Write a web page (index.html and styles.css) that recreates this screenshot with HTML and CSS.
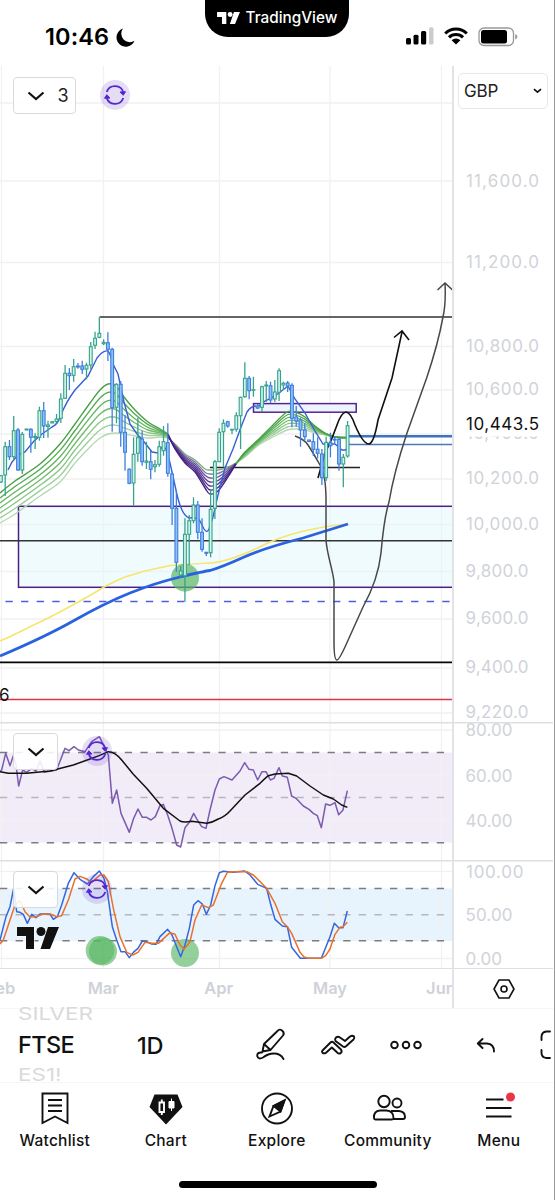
FILE: index.html
```
<!DOCTYPE html>
<html lang="en">
<head>
<meta charset="utf-8">
<title>FTSE chart</title>
<link rel="stylesheet" href="styles.css">
</head>
<body>
<svg class="defs" width="0" height="0">
  <defs>
    <symbol id="tv-logo" viewBox="0 0 42 22"><path d="M0 0H17V22H9V9H0ZM31 0H42L33 22H23.500Z"/><circle cx="24" cy="4.500" r="4.500"/></symbol>
    <symbol id="sync" viewBox="-15 -15 30 30">
      <circle r="15" fill="#6633cc" fill-opacity=".17"/>
      <path d="M-8.300 -3A8.800 8.800 0 0 1 8.500 -2.200M8.300 3A8.800 8.800 0 0 1 -8.500 2.200" fill="none" stroke="#5428cf" stroke-width="1.800"/>
      <path d="M5 -3L10.500 -3.300L8.200 .3ZM-5 3L-10.500 3.300L-8.200 -.3Z" fill="#5428cf" stroke="#5428cf" stroke-width="1"/>
    </symbol>
    <symbol id="chevron" viewBox="0 0 18 10"><path d="M1.500 1.500L9 8L16.500 1.500" fill="none" stroke="#111" stroke-width="2.200"/></symbol>
  </defs>
</svg>
<div class="screen">
  <header class="status">
    <div class="clock"><span>10:46</span>
      <svg class="moon" viewBox="0 0 19 19"><path d="M7 .5A9.300 9.300 0 1 0 18.500 12.700A8.500 8.500 0 0 1 7 .5Z"/></svg>
    </div>
    <div class="brand"><svg class="brand-logo"><use href="#tv-logo"/></svg><span>TradingView</span></div>
    <div class="signals">
      <svg width="28" height="18" viewBox="0 0 28 18"><rect y="11" width="5" height="6.500" rx="1.500"/><rect x="7.500" y="7.800" width="5" height="9.700" rx="1.500"/><rect x="15" y="4" width="5.200" height="13.500" rx="1.500"/><rect x="23" y=".3" width="4.500" height="17.200" rx="1.500" fill="#ccc"/></svg>
      <svg width="24" height="18" viewBox="0 0 24 18"><path d="M1.200 6.500A15.500 15.500 0 0 1 22.800 6.500M5 10.400A10 10 0 0 1 19 10.400" fill="none" stroke="#000" stroke-width="3"/><path d="M7.600 13.200A6.500 6.500 0 0 1 16.400 13.200L12 17.500Z"/></svg>
      <svg width="40" height="20" viewBox="0 0 40 20"><rect x="1" y="1" width="34.500" height="17.500" rx="5" fill="none" stroke="#999" stroke-width="1.300"/><rect x="3" y="3" width="26" height="13.500" rx="2.500"/><path d="M37.200 7Q39.500 8 39.500 9.700Q39.500 11.500 37.200 12.500Z" fill="#999"/></svg>
    </div>
  </header>

  <main class="chart">
    <div class="panes">
      <svg class="price" viewBox="0 66 452 656">
        <g class="grid"><path d="M1.500 66V722M103.500 66V722M219.500 66V722M330 66V722M441.500 66V722M0 103H452M0 181H452M0 262.500H452M0 346.500H452M0 390H452M0 434H452M0 479H452M0 524.500H452M0 571.500H452M0 619H452M0 668H452M0 713H452"/></g>
        <rect x="18.500" y="506.300" width="440" height="81" fill="#dff6fa" fill-opacity=".48" stroke="#4a2183" stroke-width="1.500"/>
        <path d="M5.500 601.500H452" stroke="#4a5fdc" stroke-width="1.500" stroke-dasharray="7.300 8.300"/>
        <path d="M99.500 317H452M0 540.700H452" stroke="#333" stroke-width="1.600"/>
        <path d="M0 662.300H452" stroke="#050505" stroke-width="1.700"/>
        <path d="M0 699.500H452" stroke="#dd3546" stroke-width="1.500"/>
        <path d="M210 467.500H360" stroke="#222" stroke-width="1.500"/>
        <rect x="253.500" y="403.600" width="102.700" height="8.600" fill="#eef4ff" stroke="#572391" stroke-width="1.500"/>
        <g id="ribbon" fill="none"></g>
        <path d="M0 641C16 634 25 629 40 622S90 596 104 587Q115 581 125 577L145 571L170 565.500Q190 564 210 563T270 542Q303 528 348 524" fill="none" stroke="#f6e56e" stroke-width="1.700"/>
        <circle cx="185" cy="577.700" r="14" fill="#5ab765" fill-opacity=".7"/>
        <path d="M0 656Q45 637 75 620T130 593Q155 583 180 577T210 570.500Q222 567 243 557.500T303 538L348 524" fill="none" stroke="#2a61df" stroke-width="2.800"/>
        <path d="M8 470L12 462L18 455L25 452L34 441L42 434L52 427Q58 424 60 417Q66 402 75 390L88 376L97 358Q103 350 108 351Q111 355 113 364L118 374L124 402L130 424L137 434L145 443L152 452L158 453Q162 444 166 449L170 463L176 490Q181 515 189 518Q197 517 200 521L204 529Q207 534 209 529L213 517L218 495L225 468L233 449L241 427L247 412Q251 406 256 406M256 408L265 401L275 396L288 386L295 399L305 413L315 431L323 444H335L342 450H346L349 442" fill="none" stroke="#355fd9" stroke-width="1.400"/>
        <path d="M347 436.300H452" stroke="#3e74be" stroke-width="2.500"/><path d="M347 444.500H452" stroke="#4c78b8" stroke-width="1.300"/>
        <path d="M295 436Q304 439 308 445T320 465Q326 475 326 500V540C327 555 333 570 334 582V642Q334 660 337 660Q339 660 345 647L363 607Q378 580 381 553Q384 518 389 502Q394 472 407 433L427 377Q438 344 443 317Q446 304 445 283M437.500 290L445 283L452.500 290" fill="none" stroke="#484848" stroke-width="1.500"/>
        <path d="M318 478L325 453Q332 440 337 425Q341 413 346 412Q351 413 355 425Q363 444 369 444Q374 443 378 420L392 378Q396 360 402 332M394 337.500L402 331L409 340" fill="none" stroke="#111" stroke-width="1.600"/>
        <g id="candles"></g>
        <text x="-1" y="700.800" class="note">6</text>
      </svg>
      <svg class="rsi" viewBox="0 722 452 138">
        <rect y="752.500" width="452" height="90" fill="#f2ecf9"/>
        <g class="grid"><path d="M1.500 722V860M103.500 722V860M219.500 722V860M330 722V860M441.500 722V860M0 730H452M0 775.300H452M0 820.500H452"/></g>
        <path class="divider" d="M0 722.700H452"/>
        <g class="levels"><path d="M0 752.500H452M0 842.700H452"/><path class="mid" d="M0 797.500H452"/></g>
        <g class="study" transform="translate(0 715) scale(.33333)">
          <polyline stroke="#7a5bb0" points="0,170 5,165 17,115 30,152 40,122 48,150 56,213 68,165 80,172 95,160 108,168 120,138 133,172 170,165 195,100 207,107 222,95 235,105 255,110 275,80 298,65 325,120 337,265 350,225 363,295 388,352 401,310 414,282 427,307 440,307 453,315 466,305 480,272 490,268 503,300 516,340 530,390 542,396 555,338 568,322 581,295 592,315 605,335 618,340 630,285 645,225 658,192 672,185 696,195 720,168 734,143 747,163 760,165 773,195 786,170 798,170 811,195 822,190 837,158 847,183 862,187 875,243 888,250 910,273 927,283 940,295 952,302 964,338 977,267 990,271 1005,263 1016,299 1029,285 1042,227"/>
          <path stroke="#111" d="M0 170L25 175H80L150 168L220 150L270 132Q300 122 325 110Q345 110 365 135L400 178L440 220L490 280L540 318Q550 323 575 319L620 325Q638 322 655 312Q675 305 690 288L735 240L780 205Q795 190 805 182L825 177L865 175L890 183L930 213L970 240L1000 252L1025 270L1042 277"/>
        </g>
      </svg>
      <svg class="stoch" viewBox="0 860 452 108">
        <rect y="888.500" width="452" height="52.500" fill="#e8f4fd"/>
        <g class="grid"><path d="M1.500 860V968M103.500 860V968M219.500 860V968M330 860V968M441.500 860V968M0 871.300H452M0 958.500H452"/></g>
        <path class="divider" d="M0 860.700H452"/>
        <g class="levels"><path d="M0 888.500H452M0 940.800H452"/><path class="mid" d="M0 914.700H452"/></g>
        <circle cx="100" cy="950.300" r="14.300" fill="#5ab765" fill-opacity=".65"/><circle cx="103" cy="951.500" r="14" fill="#5ab765" fill-opacity=".65"/><circle cx="185" cy="953" r="14" fill="#5ab765" fill-opacity=".65"/>
        <g class="study" transform="translate(0 715) scale(.33333)">
          <polyline stroke="#3467dd" points="0,675 18,605 30,575 41,520 50,590 60,592 70,598 82,625 95,598 108,608 120,597 150,597 160,613 172,605 185,570 205,505 222,473 240,493 262,507 280,485 298,468 312,490 322,530 337,635 350,675 363,710 375,710 388,728 400,712 414,700 427,678 440,680 455,687 468,688 480,665 503,643 516,660 530,695 542,725 555,690 568,640 581,570 594,557 607,567 619,598 632,570 645,512 658,473 670,469 700,472 734,468 750,480 773,508 800,520 812,568 825,613 847,633 862,635 875,697 901,730 964,730 990,665 1003,625 1016,638 1029,638 1042,588"/>
          <polyline stroke="#e8712d" points="0,687 10,675 25,630 45,570 60,558 75,590 90,606 110,605 130,597 150,597 170,605 185,602 205,555 225,492 240,484 260,492 275,502 300,480 312,480 325,500 340,580 360,665 380,712 398,720 414,712 435,682 455,685 475,685 510,653 525,658 540,690 552,703 570,680 585,615 605,570 625,578 640,570 665,505 682,472 700,470 740,470 760,480 800,520 825,565 847,620 862,635 875,655 900,712 912,726 925,730 964,730 977,722 990,702 1005,658 1020,637 1029,635 1042,622"/>
        </g>
      </svg>
      <div class="months"><span class="m-feb">Feb</span><span>Mar</span><span>Apr</span><span>May</span><span>Jun</span></div>
      <button class="legend main"><svg><use href="#chevron"/></svg><span>3</span></button>
      <button class="legend second"><svg><use href="#chevron"/></svg></button>
      <button class="legend third"><svg><use href="#chevron"/></svg></button>
      <svg class="sync s1"><use href="#sync"/></svg><svg class="sync s2"><use href="#sync"/></svg><svg class="sync s3"><use href="#sync"/></svg>
      <svg class="watermark"><use href="#tv-logo"/></svg>
    </div>
    <aside class="scale">
      <svg class="axis" viewBox="454 66 99 902">
        <g id="prices"></g>
        <path class="divider" d="M452 722.700H555M452 860.700H555"/>
      </svg>
      <div class="currency"><span>GBP</span><svg width="9" height="6" viewBox="0 0 9 6"><path d="M1 1.200L4.500 4.200L8 1.200" fill="none" stroke="#111" stroke-width="1.700"/></svg></div>
      <div class="axis-settings"><svg width="22" height="20" viewBox="0 0 22 20" fill="none" stroke="#111" stroke-width="1.600"><path d="M6 1H16L21 10L16 19H6L1 10Z"/><circle cx="11" cy="10" r="3"/></svg></div>
    </aside>
  </main>

  <section class="toolbar">
    <div class="wheel"><span class="ghost">SILVER</span><span class="symbol">FTSE</span><span class="ghost next">ES1!</span></div>
    <span class="interval">1D</span>
    <svg class="tools" viewBox="250 1025 303 45" fill="none" stroke="#111" stroke-width="1.900" stroke-linejoin="round" stroke-linecap="round">
      <path d="M264 1044L277.500 1031Q279.500 1028.500 282 1030.500Q285 1033 283 1035.500L270.500 1050L262.500 1051.500ZM264 1044L270.500 1050M262 1052.500Q257 1052 257.200 1056Q258.500 1060 263 1057.500C269 1053 279 1051 283.500 1059"/>
      <path d="M322.500 1050.500L330.500 1042.500Q332 1041 333.500 1042.500L341 1049.500Q342.500 1052 340.500 1053.300Q338.500 1054 337 1052.300L331.800 1047.500L326 1052.800Q323.800 1054 322.500 1052.800Q321.500 1051.500 322.500 1050.500ZM335.500 1041Q334.500 1039 336 1037.500Q338 1036 340 1037.500L345 1041L350 1036.500Q352.500 1034.800 354 1036.500Q354.800 1038.200 353.500 1039.500L346 1046.300Q344.500 1047.500 343 1046.500Z"/>
      <circle cx="394.500" cy="1045" r="3.300"/><circle cx="406" cy="1045" r="3.300"/><circle cx="417.500" cy="1045" r="3.300"/>
      <path d="M482.500 1039L477.800 1043.500L482.500 1048M478 1043.500H487Q494 1044 494 1051.500M550 1031.500H546.500Q541.500 1032 541.500 1037V1040M541.500 1050V1053Q541.500 1057.500 546.500 1058H550"/>
    </svg>
  </section>

  <nav class="tabs">
    <a><svg viewBox="0 0 36 34"><path d="M5.500 2.500H30.500V32L18 25.500L5.500 32ZM11 9H25M11 14.500H25M11 20H25"/></svg><span>Watchlist</span></a>
    <a><svg viewBox="0 0 36 34"><path d="M6.500 3.500H29.500L34.500 16L18 33.500L1.500 16Z" fill="#111" stroke="none"/><path d="M11.500 11.500H16V21H11.500ZM13.800 8.500V11.500M13.800 21V24" stroke="#fff"/><path d="M21 10.500H26V17H21ZM23.500 7.500V20" fill="#fff" stroke="#fff" stroke-width="1"/></svg><span>Chart</span></a>
    <a><svg viewBox="0 0 36 34"><circle cx="18" cy="17.500" r="15"/><path d="M25.500 9.500L21.500 20.500L10.500 25.500L14.500 15Z"/><path d="M14.500 15L25.500 9.500L21.500 20.500Z" fill="#111"/></svg><span>Explore</span></a>
    <a><svg viewBox="0 0 36 34"><circle cx="14" cy="10.500" r="5.700"/><circle cx="27" cy="12" r="4.500"/><path d="M4 27Q3.500 20 10 19.500H16.500Q23.500 20 23.500 27Q23.500 28.500 22 28.500H5.500Q4 28.500 4 27ZM21 20H29Q35 20.500 35 26Q35 28 33 28H23"/></svg><span>Community</span></a>
    <a><svg viewBox="0 0 36 34"><path d="M5 8.500H22.500M5 17H30.500M5 25.500H30.500"/><circle cx="29.500" cy="6" r="4.500" fill="#eb3446" stroke="none"/></svg><span>Menu</span></a>
  </nav>
  <div class="home"></div>
</div>
<script src="chart.js"></script>
</body>
</html>
```
FILE: styles.css
```
* { box-sizing: border-box; }
body { margin: 0; background: #fff; color: #111; font-family: Inter, "Liberation Sans", sans-serif; }
.defs { position: absolute; }
svg { display: block; }
.screen { width: 555px; height: 1200px; border-right: 1.5px solid #999; display: flex; flex-direction: column; overflow: hidden; }
.status { height: 66px; display: grid; grid-template-columns: 205px 144px 204px; align-items: start; color: #000; }
.clock { padding: 23px 0 0 45px; display: flex; gap: 7px; font-size: 23.5px; font-weight: 600; line-height: 28px; letter-spacing: .1px; }
.moon { width: 19px; height: 19px; margin-top: 5px; }
.brand { height: 36.5px; background: #000; color: #fff; border-radius: 0 0 23px 23px; display: flex; align-items: center; justify-content: center; gap: 6px; font-size: 15.3px; font-weight: 500; padding-bottom: 1px; }
.brand-logo { width: 23px; height: 12px; fill: #fff; }
.signals { padding: 27px 0 0 57px; display: flex; gap: 10px; }
.signals svg { flex: none; }
.chart { height: 942px; display: grid; grid-template-columns: 452px 101px; }
.panes { position: relative; overflow: hidden; }
.price { width: 452px; height: 656px; }
.rsi { width: 452px; height: 138px; }
.stoch { width: 452px; height: 108px; }
.divider { stroke: #dedfe3; stroke-width: 1.5; fill: none; }
.grid path { stroke: #f1f1f2; stroke-width: 1.3; fill: none; }
.levels path { stroke: #7c7c83; stroke-width: 1.4; stroke-dasharray: 7.3px 8.3px; }
.levels .mid { stroke: #b7b6be; }
.study > * { fill: none; vector-effect: non-scaling-stroke; stroke-width: 1.5px; stroke-linejoin: round; }
.note { font-size: 17px; fill: #111; }
.months { height: 40px; border-top: 1.5px solid #dedfe3; display: grid; grid-template-columns: 62.5px 115.5px 115.5px 107px 115px; margin-left: -17px; color: #cfd2d8; font-size: 16.5px; font-weight: 600; line-height: 39px; }
.months span { text-align: center; }
.months .m-feb { text-align: left; padding-left: 3px; }
.legend { position: absolute; left: 13px; height: 37px; border: 1px solid #d9d9dc; border-radius: 4px; background: rgba(255,255,255,.88); display: flex; align-items: center; padding: 0 0 0 12.5px; gap: 13px; font: 18px Inter, sans-serif; color: #222; }
.legend svg { width: 18px; height: 10px; }
.main { top: 11px; width: 63px; }
.second { top: 667px; width: 45px; }
.third { top: 805px; width: 45px; }
.sync { position: absolute; width: 30px; height: 30px; }
.s1 { left: 100px; top: 14px; }
.s2 { left: 82px; top: 670px; }
.s3 { left: 82px; top: 808px; }
.watermark { position: absolute; left: 17px; top: 861px; width: 42px; height: 22px; fill: #111; stroke: #fff; stroke-width: 1px; paint-order: stroke; overflow: visible; }
.scale { position: relative; border-left: 2px solid #e2e3e7; display: flex; flex-direction: column; }
.axis { width: 99px; height: 902px; flex: none; }
.axis text { font-size: 17px; fill: #d0d3d9; }
.axis .last { fill: #111; }
.currency { position: absolute; left: 4px; top: 7px; width: 90px; height: 36px; border: 1px solid #e6e7ea; border-radius: 5px; background: #fff; display: flex; align-items: center; justify-content: space-between; padding: 0 5px; font-size: 17px; letter-spacing: -.1px; color: #222; }
.axis-settings { display: flex; flex: 1; align-items: center; justify-content: center; border-top: 1.5px solid #dedfe3; }
.toolbar { height: 75px; display: grid; grid-template-columns: 137px 113px 303px; align-items: center; border-top: 1px solid #f6f6f7; border-bottom: 1px solid #f6f6f7; }
.wheel { display: flex; flex-direction: column; padding-left: 18px; align-self: start; }
.ghost { width: max-content; height: 15px; line-height: 15px; margin-top: -2px; font-size: 17px; color: #dadada; transform: scaleX(1.32); transform-origin: 0; }
.symbol { font-size: 23.5px; line-height: 30px; margin-top: 8px; letter-spacing: -.6px; font-weight: 450; }
.next { margin-top: 8px; }
.interval { font-size: 23.5px; font-weight: 450; letter-spacing: -.2px; padding-bottom: 2px; }
.tools { width: 303px; height: 45px; margin-top: 3px; }
.tabs { height: 98px; display: grid; grid-template-columns: repeat(5, 111px); margin-left: -.7px; }
.tabs a { display: flex; flex-direction: column; align-items: center; padding-top: 7.5px; font-size: 15.5px; font-weight: 500; letter-spacing: .25px; gap: 6.5px; line-height: 20px; }
.tabs svg { width: 36px; height: 34px; fill: none; stroke: #111; stroke-width: 1.9; }
.home { width: 198px; height: 7px; border-radius: 4px; background: #000; margin: 0 0 0 179px; }
```
FILE: chart.js
```
const NS = "http://www.w3.org/2000/svg";
function add(parent, name, attrs) {
  const el = document.createElementNS(NS, name);
  for (const key in attrs) el.setAttribute(key, attrs[key]);
  parent.appendChild(el);
  return el;
}

// Candles, one per session: high, low, body top, body bottom, rising (1) or falling (0)
const candles = [
  [475,483,475.7,482,1],[441.7,496,446.7,475,1],[440,460,446.7,456.7,0],[416,460,430.7,456.7,1],[428,470.7,430,470,0],
  [432,474,434.3,470,1],[429,430,429,430,1],[428.3,452.7,429.3,437.3,0],[433.3,449,436.5,437.5,1],[406.7,440.7,410.7,437.3,1],
  [402,438,410.7,426,0],[420.7,437.7,425,426.5,1],[421.7,423,421.7,423,1],[414,423.5,419,421.5,1],[393.3,423,399,418.3,1],
  [365,399,373.3,398.3,1],[368,390,373.3,375.7,0],[359,381.7,366.7,375.3,1],[363,368.7,366,367,0],[360.7,374,366,369.3,0],
  [362.7,379.3,365.3,369,1],[342,369,346.7,365,1],[331.7,349,338.3,345.3,1],[317.3,338.3,333.3,337.3,1],[339.3,345,342.3,343.7,1],
  [332.3,361,342.7,349.3,0],[347.7,431.7,349.3,407.7,0],[383.3,423.3,384.3,407.3,1],[381,446.7,384.3,432.3,0],[415,470.7,432.3,452.3,0],
  [468.3,484.3,469.3,483.3,0],[437.3,505.7,454.3,483,1],[417.7,461.7,437.7,453.3,1],[430.7,465.7,439,461.7,0],[441.7,469,461,462.3,1],
  [450.7,479.3,461.7,469.3,0],[460,472.3,464.7,466.7,1],[440.7,466.7,446.7,464.3,1],[426,455.7,441.7,450.7,1],[423.3,476.7,442.7,473.3,0],
  [471.7,525,474,508.3,0],[490,571.7,508.3,562.3,0],[566,577,571,575,1],[518.3,601.7,534.3,575.7,1],[515,565,520.7,534.3,1],
  [497.3,523.3,505,520.7,1],[501,539.3,505,532.3,0],[518.3,551.7,532.3,549.3,0],[552.3,556,552.3,553.3,0],[490,557.3,509.3,552.7,1],
  [460,519,461.7,508.3,1],[428.3,461.7,432.3,461.7,1],[419.3,466.7,423.3,431.7,1],[420.7,427.7,421.7,426,0],[429.3,434,429.3,430,1],
  [412.3,431.7,415.7,429.3,1],[396.7,449,397.3,415.7,1],[362.3,397.7,378.3,396.7,1],[376,399.3,378.3,390.7,0],[376.7,396.7,389.7,390.3,1],
  [404,409,406,408,0],[385.7,411.7,386.7,407.3,1],[381,402,385,386,1],[381.7,403.3,385.7,400,0],[380,402,392,399,1],
  [368.3,401,370.7,392.3,1],[381.7,390,383.3,385,1],[381,392,383,386,0],[383.3,427.3,385.3,418.3,0],[406,426.7,417,421,0],
  [417.7,446.7,420,430,0],[423.3,440.7,430,436.7,0],[440,442,440,441.5,0],[433.3,456,441.7,449.3,0],[437.3,458.3,449.3,453.3,0],
  [449,485,454,477.7,0],[436.7,481,442.3,477.7,1],[432.7,457.3,442.7,445.7,0],[436,443.3,439.3,440,0],[438.3,470.7,439.3,464,0],
  [454,487.3,457.3,464,1],[421,457.7,425.7,456,1]
];
const candleLayer = document.getElementById("candles");
candles.forEach(([high, low, top, bottom, up], i) => {
  const x = 0.9 + i * 4.28;
  const stroke = up ? "#36a28d" : "#3e7fdc";
  add(candleLayer, "path", { d: `M${x} ${high}V${low}`, stroke, "stroke-width": 1.3 });
  add(candleLayer, "rect", { x: x - 1.4, y: top, width: 2.8, height: Math.max(.6, bottom - top),
    fill: up ? "#d0f5ea" : "#8fc1f7", stroke, "stroke-width": 1.1 });
});

// Moving-average ribbon, blended between its fastest and slowest line
const xs = [0,15,40,60,75,90,100,108,116,124,135,148,160,168,175,185,195,205,210,218,228,236,245,260,275,287,295,305,315,325,335,347];
const fast = [493,481,464,444,424,403,390,384,386,397,410,422,429,434,449,463,472,488,494,491,477,464,452,438,423,412,412,417,426,433,437,438];
const slow = [523,514,496,482,463,447,438,434,433,434,436,438,437,438,444,454,460,469,470,470,467,463,457,444,436,430,429,430,433,435,437,437];
const greens = ["#46a043","#53aa4f","#62b45e","#72bb6e","#88c685","#9fcf9c","#b4d9b2"];
const purples = ["#43207f","#4c2888","#553391","#5f409a","#6d52a0","#7f7a9c","#7fae84"];
function smooth(points) {
  let d = `M${points[0]}`;
  for (let i = 0; i < points.length - 1; i++) {
    const a = points[Math.max(0, i - 1)], b = points[i], c = points[i + 1], e = points[Math.min(points.length - 1, i + 2)];
    d += `C${b[0] + (c[0] - a[0]) / 6} ${b[1] + (c[1] - a[1]) / 6} ${c[0] - (e[0] - b[0]) / 6} ${c[1] - (e[1] - b[1]) / 6} ${c}`;
  }
  return d;
}
const ribbon = document.getElementById("ribbon");
for (let line = 6; line >= 0; line--) {
  const pts = xs.map((x, i) => [x, fast[i] + (slow[i] - fast[i]) * line / 6]);
  [[0, 14, greens], [13, 22, purples], [21, 32, greens]].forEach(([from, to, colors]) =>
    add(ribbon, "path", { d: smooth(pts.slice(from, to)), stroke: colors[line], "stroke-width": 1.35 }));
}

// Scale labels: text, vertical centre, left edge, width
const labels = [["11,600.0",180.5,466,73],["11,200.0",261.5,466,73],["10,800.0",346,466,73],["10,600.0",389,466,73],["10,400.0",433,466,73],
  ["10,200.0",478,466,73],["10,000.0",524,466,73],["9,800.0",571,465.5,63],["9,600.0",618,465.5,63],["9,400.0",667,465.5,63],["9,220.0",712,465.5,63],
  ["80.00",730,465.5,47],["60.00",775.3,465.5,47],["40.00",820.5,465.5,47],["100.00",871.3,466,57.5],["50.00",915,465.5,47],["0.00",958.5,465.5,36.5]];
const prices = document.getElementById("prices");
function label([text, y, x, width], cls) {
  add(prices, "text", { x, y: y + 6.2, textLength: width, class: cls }).textContent = text;
}
labels.forEach(item => label(item, ""));
// The last-price tag covers the top of the 10,400 label
add(prices, "rect", { x: 455, y: 412, width: 97, height: 24.5, fill: "#fff" });
label(["10,443.5", 423.5, 466, 73], "last");
```
